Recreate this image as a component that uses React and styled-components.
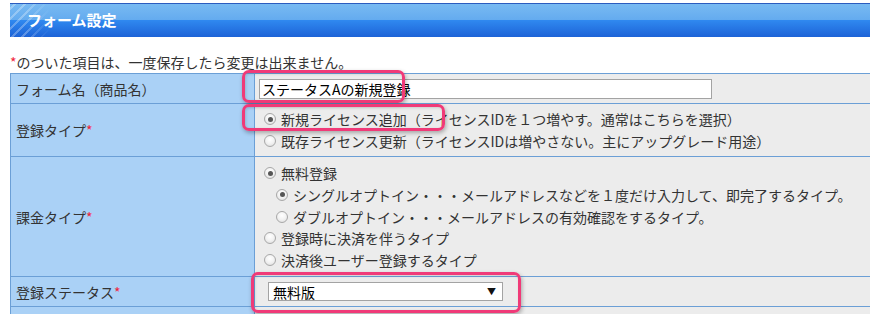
import React from "react";
import styled, { createGlobalStyle } from "styled-components";

const GlobalStyle = createGlobalStyle`
  html, body { margin: 0; padding: 0; background: #fff; overflow: hidden; }
  body { font-family: "Noto Sans CJK JP", "Noto Sans", sans-serif; color: #333; }
`;

const Page = styled.div`
  position: relative;
  width: 870px;
  height: 314px;
  overflow: hidden;
  padding: 3px 0 0 10px;
  box-sizing: border-box;
`;

const Header = styled.div`
  position: relative;
  height: 33px;
  border-top: 1px solid #2b5cbf;
  background: linear-gradient(to bottom, #78baf2 0%, #64abef 48%, #2f88ef 50%, #1d63d7 100%);
  overflow: hidden;
  &::before {
    content: "";
    position: absolute;
    left: 0;
    top: 0;
    width: 40px;
    height: 100%;
    background: repeating-linear-gradient(-45deg, rgba(255,255,255,0) 0 5px, rgba(255,255,255,0.28) 5px 7px);
    -webkit-mask-image: linear-gradient(to right, #000 40%, transparent);
    mask-image: linear-gradient(to right, #000 40%, transparent);
  }
`;

const Title = styled.h1`
  position: relative;
  margin: 0;
  padding-left: 17px;
  font-size: 15px;
  font-weight: bold;
  line-height: 32px;
  color: #fff;
`;

const Notice = styled.p`
  margin: 15px 0 1px;
  font-size: 14px;
  line-height: 20px;
  height: 20px;
  color: #333;
`;

const Req = styled.span`
  color: #f0243c;
`;

const Table = styled.table`
  width: 880px;
  border-collapse: collapse;
  font-size: 14px;
  line-height: 20px;
`;

const Row = styled.tr`
  height: ${(p) => p.$h}px;
`;

const Label = styled.th`
  width: 238px;
  padding: 0 0 0 5px;
  text-align: left;
  font-weight: normal;
  background: #aad1f6;
  border: 1px solid #6b9fd6;
  color: #333;
  vertical-align: middle;
`;

const Cell = styled.td`
  background: #ececec;
  border: 1px solid #6b9fd6;
  padding: 2px 0 2px 9px;
  vertical-align: middle;
`;

const TextInput = styled.input`
  display: block;
  width: 453px;
  height: 20px;
  box-sizing: border-box;
  border: 1px solid #a3a3a3;
  background: #fff;
  padding: 0 2px;
  margin-left: -5px;
  font-family: "Noto Sans CJK JP", sans-serif;
  font-size: 14px;
  color: #000;
  outline: none;
`;

const SelectBox = styled.div`
  display: flex;
  align-items: center;
  justify-content: space-between;
  width: 235px;
  height: 19px;
  box-sizing: border-box;
  border: 1px solid #a3a3a3;
  background: #fff;
  padding: 0 6px 0 4px;
  margin-left: 4px;
  font-size: 14px;
  color: #000;
`;

const Arrow = styled.span`
  font-size: 9px;
  color: #111;
`;

const RadioLine = styled.div`
  display: flex;
  align-items: center;
  height: ${(p) => p.$lh || 22}px;
  padding-left: ${(p) => p.$indent || 0}px;
  white-space: nowrap;
  color: #333;
`;

const RadioMark = styled.span`
  position: relative;
  width: 12px;
  height: 12px;
  border-radius: 50%;
  box-sizing: border-box;
  border: 1px solid #a8a8a8;
  background: radial-gradient(circle at 50% 35%, #ffffff 0%, #f2f2f2 50%, #d9d9d9 100%);
  margin-right: 5px;
  flex-shrink: 0;
  &::after {
    content: "";
    display: ${(p) => (p.$checked ? "block" : "none")};
    position: absolute;
    left: 2.5px;
    top: 2.5px;
    width: 5px;
    height: 5px;
    border-radius: 50%;
    background: #555;
  }
`;

const Highlight = styled.div`
  position: absolute;
  box-sizing: border-box;
  border: 3px solid #f03a78;
  border-radius: 7px;
  box-shadow: 1px 2px 4px rgba(0, 0, 0, 0.3), inset 1px 1px 3px rgba(0, 0, 0, 0.15);
  pointer-events: none;
`;

const Radio = ({ checked, indent, lh, children }) => (
  <RadioLine $indent={indent} $lh={lh}>
    <RadioMark $checked={checked} />
    {children}
  </RadioLine>
);

export default function App() {
  return (
    <>
      <GlobalStyle />
      <Page>
        <Header>
          <Title>フォーム設定</Title>
        </Header>
        <Notice>
          <Req>*</Req>のついた項目は、一度保存したら変更は出来ません。
        </Notice>
        <Table>
          <tbody>
            <Row $h={30}>
              <Label>フォーム名（商品名）</Label>
              <Cell>
                <TextInput defaultValue="ステータスAの新規登録" />
              </Cell>
            </Row>
            <Row $h={53}>
              <Label>
                登録タイプ<Req>*</Req>
              </Label>
              <Cell>
                <Radio checked>新規ライセンス追加（ライセンスIDを１つ増やす。通常はこちらを選択）</Radio>
                <Radio>既存ライセンス更新（ライセンスIDは増やさない。主にアップグレード用途）</Radio>
              </Cell>
            </Row>
            <Row $h={120}>
              <Label>
                課金タイプ<Req>*</Req>
              </Label>
              <Cell>
                <Radio checked lh={21.6}>無料登録</Radio>
                <Radio checked indent={12} lh={21.6}>シングルオプトイン・・・メールアドレスなどを１度だけ入力して、即完了するタイプ。</Radio>
                <Radio indent={12} lh={21.6}>ダブルオプトイン・・・メールアドレスの有効確認をするタイプ。</Radio>
                <Radio lh={21.6}>登録時に決済を伴うタイプ</Radio>
                <Radio lh={21.6}>決済後ユーザー登録するタイプ</Radio>
              </Cell>
            </Row>
            <Row $h={30}>
              <Label>
                登録ステータス<Req>*</Req>
              </Label>
              <Cell>
                <SelectBox>
                  <span>無料版</span>
                  <Arrow>▼</Arrow>
                </SelectBox>
              </Cell>
            </Row>
            <Row $h={30}>
              <Label />
              <Cell />
            </Row>
          </tbody>
        </Table>
        <Highlight style={{ left: 242, top: 70, width: 163, height: 33 }} />
        <Highlight style={{ left: 242, top: 104, width: 203, height: 27 }} />
        <Highlight style={{ left: 251, top: 272, width: 270, height: 41 }} />
      </Page>
    </>
  );
}
